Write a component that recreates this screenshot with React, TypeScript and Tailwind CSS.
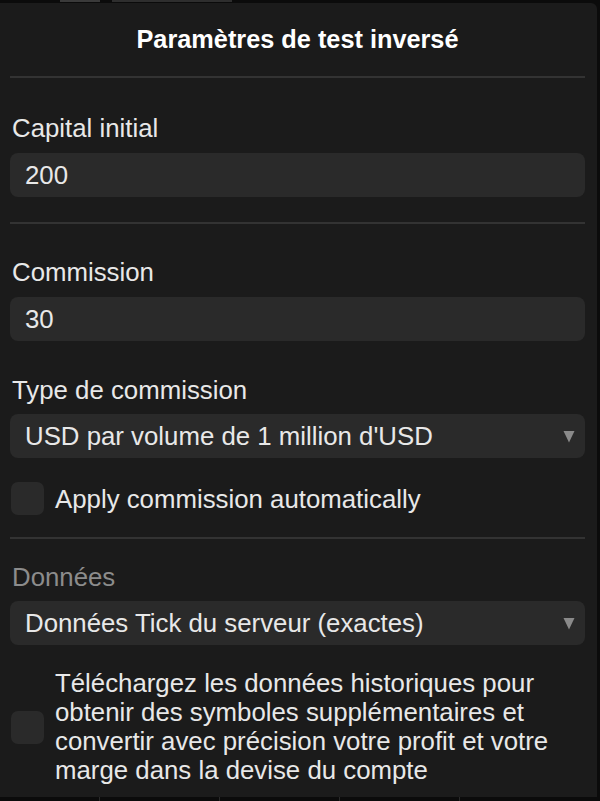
import React from "react";

const Caret = () => (
  <svg width="12" height="13" viewBox="0 0 12 13" className="shrink-0">
    <path d="M0.5 1 L11.5 1 L6 12.5 Z" fill="#8a8a8a" />
  </svg>
);

const Divider = () => <div className="h-[2px] bg-[#333333]" />;

export default function App() {
  return (
    <div
      className="w-[600px] h-[801px] bg-[#0b0b0b] overflow-hidden relative"
      style={{ fontFamily: '"Liberation Sans", Arial, sans-serif' }}
    >
      <div className="h-[3px] flex gap-3 pl-[60px] items-start">
        <div className="w-[40px] h-[2px] bg-[#3a3a3a]" />
        <div className="w-[120px] h-[2px] bg-[#2e2e2e]" />
      </div>
      <div className="w-[597px] h-[794px] bg-[#1b1b1b] rounded-tr-[6px] pl-[10px] pr-[12px] text-[#e8e8e8] text-[25.8px] leading-[30px]">
        <div className="pt-[21px] pb-[22px] text-center font-bold text-white text-[25.3px]">
          Paramètres de test inversé
        </div>
        <Divider />
        <div className="mt-[35px] pl-[2px]">Capital initial</div>
        <div className="mt-[10px] h-[44px] rounded-[8px] bg-[#2a2a2a] flex items-center px-[15px]">
          200
        </div>
        <div className="mt-[25px]">
          <Divider />
        </div>
        <div className="mt-[33px] pl-[2px]">Commission</div>
        <div className="mt-[10px] h-[44px] rounded-[8px] bg-[#2a2a2a] flex items-center px-[15px]">
          30
        </div>
        <div className="mt-[34px] pl-[2px]">Type de commission</div>
        <div className="mt-[9px] h-[44px] rounded-[8px] bg-[#2a2a2a] flex items-center justify-between pl-[15px] pr-[10px]">
          <span>USD par volume de 1 million d'USD</span>
          <Caret />
        </div>
        <div className="mt-[24px] flex items-center gap-[11px] pl-[1px]">
          <div className="w-[33px] h-[33px] rounded-[7px] bg-[#2a2a2a] shrink-0" />
          <span>Apply commission automatically</span>
        </div>
        <div className="mt-[22px]">
          <Divider />
        </div>
        <div className="mt-[23px] pl-[2px] text-[#8c8c8c]">Données</div>
        <div className="mt-[9px] h-[44px] rounded-[8px] bg-[#2a2a2a] flex items-center justify-between pl-[15px] pr-[10px]">
          <span>Données Tick du serveur (exactes)</span>
          <Caret />
        </div>
        <div className="mt-[24px] flex items-center gap-[11px] pl-[1px]">
          <div className="w-[33px] h-[33px] rounded-[7px] bg-[#2a2a2a] shrink-0" />
          <p className="leading-[29px]">
            Téléchargez les données historiques pour obtenir des symboles
            supplémentaires et convertir avec précision votre profit et votre
            marge dans la devise du compte
          </p>
        </div>
      </div>
      <div className="flex h-[4px]">
        <div className="w-[100px] border-r border-[#2a2a2a]" />
        <div className="w-[120px] border-r border-[#2a2a2a]" />
        <div className="w-[120px] border-r border-[#2a2a2a]" />
        <div className="w-[120px] border-r border-[#2a2a2a]" />
      </div>
    </div>
  );
}
